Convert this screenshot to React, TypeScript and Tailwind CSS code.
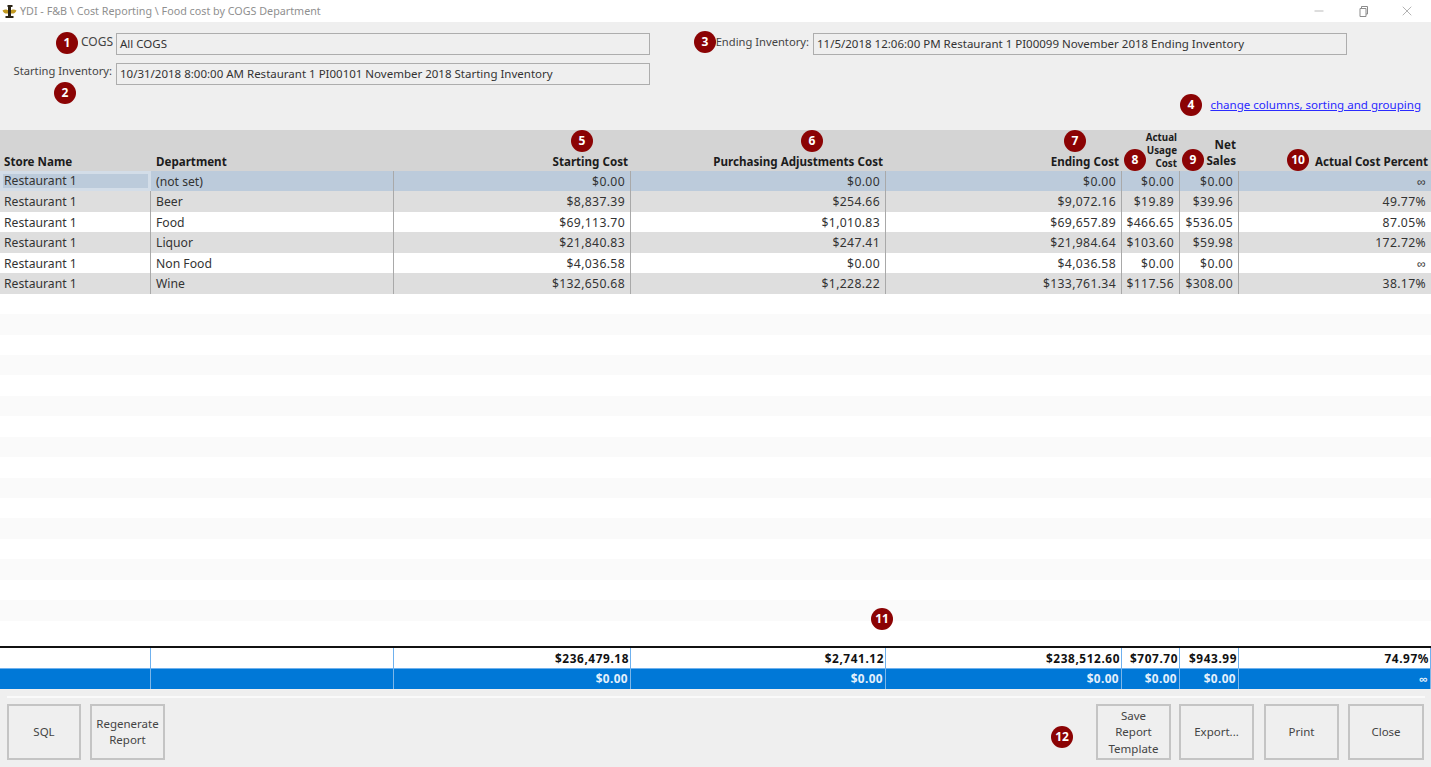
import type { ReactNode } from "react";
import { Minus, X } from "lucide-react";

const COLS = "grid grid-cols-[151px_243px_237px_255px_236px_58px_59px_1fr]";

const rows = [
    ["Restaurant 1", "(not set)", "$0.00", "$0.00", "$0.00", "$0.00", "$0.00", "∞"],
    ["Restaurant 1", "Beer", "$8,837.39", "$254.66", "$9,072.16", "$19.89", "$39.96", "49.77%"],
    ["Restaurant 1", "Food", "$69,113.70", "$1,010.83", "$69,657.89", "$466.65", "$536.05", "87.05%"],
    ["Restaurant 1", "Liquor", "$21,840.83", "$247.41", "$21,984.64", "$103.60", "$59.98", "172.72%"],
    ["Restaurant 1", "Non Food", "$4,036.58", "$0.00", "$4,036.58", "$0.00", "$0.00", "∞"],
    ["Restaurant 1", "Wine", "$132,650.68", "$1,228.22", "$133,761.34", "$117.56", "$308.00", "38.17%"],
];

const totals = ["", "", "$236,479.18", "$2,741.12", "$238,512.60", "$707.70", "$943.99", "74.97%"];
const blueTotals = ["", "", "$0.00", "$0.00", "$0.00", "$0.00", "$0.00", "∞"];
const emptyRows = [0, 1, 2, 3, 4, 5, 6, 7, 8, 9, 10, 11, 12, 13, 14, 15];

export default function App() {
    return (
        <div className="w-full h-[767px] overflow-hidden flex flex-col bg-white text-[11.5px] text-[#333] font-['Open_Sans','Noto_Sans',sans-serif]">
            <TitleBar />
            <FilterForm />
            <ReportHeader />
            <div className="relative h-[475px] bg-white">
                {rows.map((row, i) => (
                    <DataRow key={i} row={row} index={i} />
                ))}
                {emptyRows.map((i) => (
                    <div key={i} className={`h-[20.45px] ${i % 2 === 1 ? "bg-[#fafafa]" : "bg-white"}`} />
                ))}
                <Badge label="11" className="left-[871px] top-[437px]" />
            </div>
            <Totals />
            <ButtonBar />
        </div>
    );
}

function TitleBar() {
    return (
        <div className="h-[22px] shrink-0 flex items-center justify-between bg-white">
            <div className="flex items-center pl-[2px]">
                <svg width="15" height="16" viewBox="0 0 15 16" className="mr-[3px]">
                    <path d="M5.500 2h5v2H9v9h2.500v2h-8v-2H6V4H5.500z" fill="#2b2416" />
                    <path d="M.5 7.500C3 6 5 6.500 7.500 8 10 6.500 12 6 14.500 7.500 13 11 10 11 7.500 10 5 11 2 11 .5 7.500z" fill="#c29a22" />
                    <path d="M6 6h3v5.500H6z" fill="#2b2416" />
                </svg>
                <span className="text-[10.75px] text-[#8f8f8f]">YDI - F&amp;B \ Cost Reporting \ Food cost by COGS Department</span>
            </div>
            <div className="flex items-center text-[#8c8c8c] pr-[17px] gap-[30px]">
                <div className="w-[14px] flex justify-center"><Minus className="w-[14px] h-[14px]" strokeWidth={1} /></div>
                <div className="w-[14px] flex justify-center">
                    <svg width="11" height="11" viewBox="0 0 11 11" fill="none" stroke="currentColor" strokeWidth="1">
                        <path d="M2 2.500h6v8H2zM3.500 2.500V.5h6v7.500H8" />
                    </svg>
                </div>
                <div className="w-[14px] flex justify-center"><X className="w-[16px] h-[16px] shrink-0" strokeWidth={1} /></div>
            </div>
        </div>
    );
}

function FilterForm() {
    return (
        <div className="relative h-[108px] shrink-0 bg-[#efefef] pt-[11px]">
            <div className="flex">
                <div className="w-[116px] text-right pr-[3px] text-[12px] text-[#444]">COGS</div>
                <ReadOnlyField value="All COGS" />
                <div className="w-[163px] text-right pr-[4px] pt-px text-[11.2px] text-[#444]">Ending Inventory:</div>
                <ReadOnlyField value="11/5/2018 12:06:00 PM Restaurant 1 PI00099 November 2018 Ending Inventory" />
            </div>
            <div className="flex mt-[8px]">
                <div className="w-[116px] text-right pr-[4px] text-[11.2px] text-[#444] whitespace-nowrap">Starting Inventory:</div>
                <ReadOnlyField value="10/31/2018 8:00:00 AM Restaurant 1 PI00101 November 2018 Starting Inventory" />
            </div>
            <div className="flex justify-end pr-[10px] mt-[11px]">
                <a className="text-[#2a2aff] underline text-[11.55px]">change columns, sorting and grouping</a>
            </div>
            <Badge label="1" className="left-[56px] top-[10px]" />
            <Badge label="2" className="left-[54px] top-[60px]" />
            <Badge label="3" className="left-[694px] top-[9px]" />
            <Badge label="4" className="left-[1180px] top-[72px]" />
        </div>
    );
}

function ReadOnlyField({ value }: { value: string }) {
    return (
        <div className="w-[534px] h-[22px] flex items-center px-[3px] border border-[#adadad] bg-[#efefef] text-[#333] whitespace-nowrap">
            {value}
        </div>
    );
}

function ReportHeader() {
    return (
        <div className={`relative h-[41px] shrink-0 bg-[#d4d4d4] font-bold text-[#1c1c1c] text-[11.6px] ${COLS}`}>
            <HeaderCell className="pl-[4px] pb-px">Store Name</HeaderCell>
            <HeaderCell className="pl-[5px] pb-px">Department</HeaderCell>
            <HeaderCell className="justify-end pr-[3px] pb-px">Starting Cost</HeaderCell>
            <HeaderCell className="justify-end pr-[3px] pb-px">Purchasing Adjustments Cost</HeaderCell>
            <HeaderCell className="justify-end pr-[3px] pb-px">Ending Cost</HeaderCell>
            <HeaderCell className="justify-end pr-[3px] text-right text-[9.8px] leading-[13px] pb-px">
                Actual<br />Usage<br />Cost
            </HeaderCell>
            <HeaderCell className="justify-end pr-[3px] text-right leading-[16px] pb-[2px]">
                Net<br />Sales
            </HeaderCell>
            <HeaderCell className="justify-end pr-[3px] pb-px">Actual Cost Percent</HeaderCell>
            <Badge label="5" className="left-[571px] top-0" />
            <Badge label="6" className="left-[801px] top-0" />
            <Badge label="7" className="left-[1064px] top-0" />
            <Badge label="8" className="left-[1124px] top-[19px]" />
            <Badge label="9" className="left-[1182px] top-[19px]" />
            <Badge label="10" className="left-[1287px] top-[19px]" />
        </div>
    );
}

function HeaderCell({ children, className }: { children: ReactNode; className: string }) {
    return <div className={`flex items-end ${className}`}><span>{children}</span></div>;
}

function DataRow({ row, index }: { row: string[]; index: number }) {
    const selected = index === 0;
    const bg = selected ? "bg-[#bccbdb]" : index % 2 === 1 ? "bg-[#dedede]" : "bg-white";
    return (
        <div className={`h-[20.45px] text-[12.2px] ${COLS} ${bg}`}>
            {row.map((cell, i) => {
                let cellClass = "text-right pr-[5px] tracking-[0.35px] leading-[18px] pt-[2px] border-r border-[#a9a9a9]";
                if (i === 7) cellClass = "text-right pr-[5px] tracking-[0.35px] leading-[18px] pt-[2px]";
                if (i === 1) cellClass = "pl-[5px] leading-[18px] pt-[2px] border-r border-[#a9a9a9]";
                if (i === 0) {
                    cellClass = selected
                        ? "pl-[1px] leading-[14px] border-[3px] border-[#d3dde8]"
                        : "pl-[4px] leading-[18px] pt-[2px] border-r border-[#a9a9a9]";
                }
                return (
                    <div key={i} className={`whitespace-nowrap overflow-hidden ${cellClass}`}>
                        {cell}
                    </div>
                );
            })}
        </div>
    );
}

function Totals() {
    return (
        <div className="h-[43px] shrink-0 border-t-2 border-[#111] font-bold text-[11.8px]">
            <div className={`h-[21px] leading-[20px] bg-white text-[#111] ${COLS}`}>
                {totals.map((cell, i) => (
                    <div key={i} className="text-right tracking-[0.6px] pr-px border-r border-[#6fb1ee] border-b">{cell}</div>
                ))}
            </div>
            <div className={`h-[20px] leading-[19px] bg-[#0078d7] text-[#e4f0fb] ${COLS}`}>
                {blueTotals.map((cell, i) => (
                    <div key={i} className="text-right tracking-[0.4px] pr-[2px] border-r border-[#7db6e8]">{cell}</div>
                ))}
            </div>
        </div>
    );
}

function ButtonBar() {
    return (
        <div className="relative flex-1 bg-[#efefef] px-[7px] pt-[15px]">
            <div className="absolute left-[7px] right-[6px] top-[7px] h-[2px] bg-[#fafafa]" />
            <div className="flex justify-between">
                <div className="flex gap-[9px]">
                    <ActionButton className="w-[74px]">SQL</ActionButton>
                    <ActionButton className="w-[75px]">Regenerate<br />Report</ActionButton>
                </div>
                <div className="flex">
                    <ActionButton className="w-[75px] mr-[8px] pt-px">Save<br />Report<br />Template</ActionButton>
                    <ActionButton className="w-[75px] mr-[10px]">Export...</ActionButton>
                    <ActionButton className="w-[75px] mr-[9px]">Print</ActionButton>
                    <ActionButton className="w-[76px]">Close</ActionButton>
                </div>
            </div>
            <Badge label="12" className="left-[1051px] top-[37px]" />
        </div>
    );
}

function ActionButton({ children, className }: { children: ReactNode; className: string }) {
    return (
        <button className={`h-[56px] border-2 border-[#c4c4c4] bg-[#efefef] text-[#444] text-center leading-[16.5px] ${className}`}>
            {children}
        </button>
    );
}

function Badge({ label, className }: { label: string; className: string }) {
    return (
        <span className={`absolute w-[22px] h-[22px] rounded-full bg-[#8b0304] text-white text-[12px] font-bold flex items-center justify-center ${className}`}>
            {label}
        </span>
    );
}
